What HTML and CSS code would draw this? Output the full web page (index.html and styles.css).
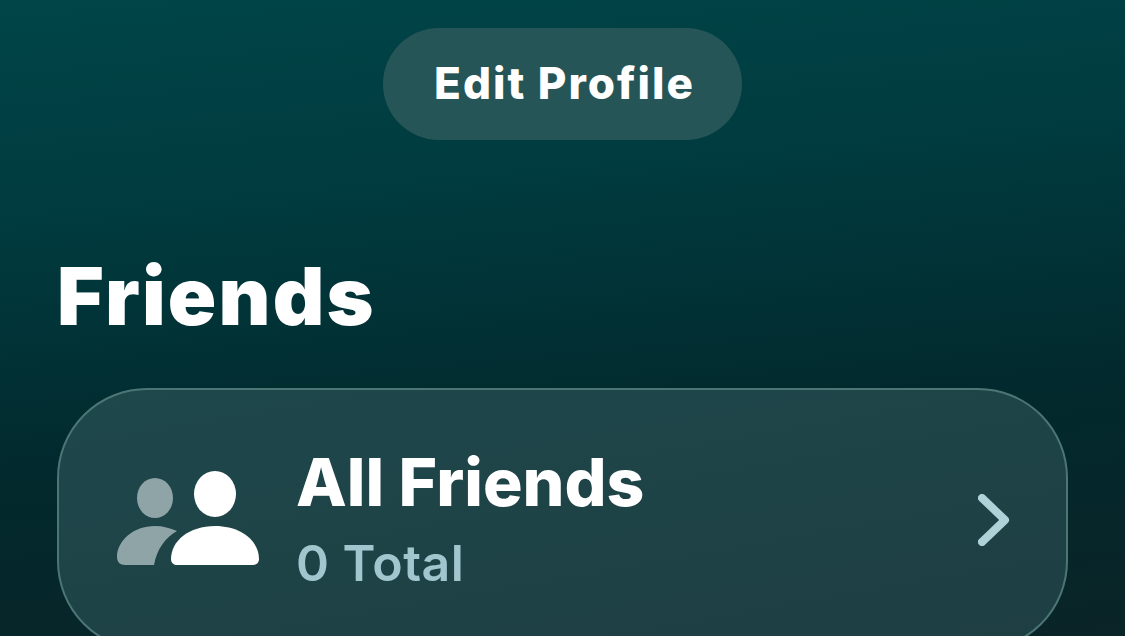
FILE: index.html
```html
<!DOCTYPE html>
<html lang="en">
<head>
  <meta charset="UTF-8" />
  <title>Profile</title>
  <link rel="stylesheet" href="styles.css">
</head>
<body>
  <main class="profile-screen">
    <div class="profile-actions">
      <button class="edit-btn">Edit Profile</button>
    </div>

    <h1 class="section-title">Friends</h1>

    <section class="friends-card">
      <svg class="friends-icon" viewBox="0 0 142 94" aria-hidden="true">
        <ellipse class="person-back" cx="38" cy="27" rx="18" ry="20" />
        <path class="person-back" d="M0 86C0 70 16 55 38 55C46 55 53 57 60 60C48 67 40 78 37 94H8C3 94 0 91 0 86Z" />
        <ellipse class="person-front" cx="98" cy="23" rx="21" ry="23" />
        <path class="person-front" d="M54 88C54 70 72 55 98 55C124 55 142 70 142 88C142 92 139 94 136 94H60C57 94 54 92 54 88Z" />
      </svg>
      <div class="friends-text">
        <div class="friends-name">All Friends</div>
        <div class="friends-count">0 Total</div>
      </div>
      <svg class="chevron" viewBox="0 0 32 52" aria-hidden="true">
        <path d="M4 4L27 26L4 48" />
      </svg>
    </section>
  </main>
</body>
</html>
```

FILE: styles.css
```css
* {
  box-sizing: border-box;
}

html,
body {
  height: 100%;
  margin: 0;
  overflow: hidden;
}

body {
  font-family: Inter, "Liberation Sans", sans-serif;
  background: linear-gradient(175deg, #004548 0%, #003b3f 30%, #02292d 65%, #0a2427 100%);
  color: #fff;
}

.profile-screen {
  padding: 28px 57px 0;
}

.profile-actions {
  display: flex;
  justify-content: center;
}

.edit-btn {
  width: 359px;
  height: 112px;
  padding: 0 0 2px 4px;
  border: none;
  border-radius: 56px;
  background: #265558;
  color: #fff;
  font: 800 44px Inter, "Liberation Sans", sans-serif;
  letter-spacing: 2px;
}

.section-title {
  margin: 110px 0 0;
  font-size: 80px;
  font-weight: 900;
  letter-spacing: 2.2px;
  line-height: 92px;
}

.friends-card {
  display: flex;
  align-items: center;
  height: 263px;
  margin-top: 46px;
  padding: 0 36px 0 58px;
  border: 2px solid #4c7675;
  border-radius: 90px;
  background: linear-gradient(170deg, #1e484c 0%, #1e3e42 100%);
}

.friends-icon {
  flex: none;
  width: 142px;
  height: 94px;
  margin-right: 37px;
  margin-top: -4px;
}

.person-back {
  fill: #8ea4a7;
}

.person-front {
  fill: #fff;
}

.friends-text {
  flex: 1;
}

.friends-name {
  font-size: 66px;
  font-weight: 800;
  line-height: 72px;
}

.friends-count {
  margin-top: 15px;
  font-size: 50px;
  font-weight: 600;
  letter-spacing: 0.5px;
  line-height: 60px;
  color: #a2c6cd;
}

.chevron {
  flex: none;
  width: 32px;
  height: 52px;
  margin-right: 20px;
  fill: none;
  stroke: #aed2d8;
  stroke-width: 8;
  stroke-linecap: round;
  stroke-linejoin: round;
}
```
